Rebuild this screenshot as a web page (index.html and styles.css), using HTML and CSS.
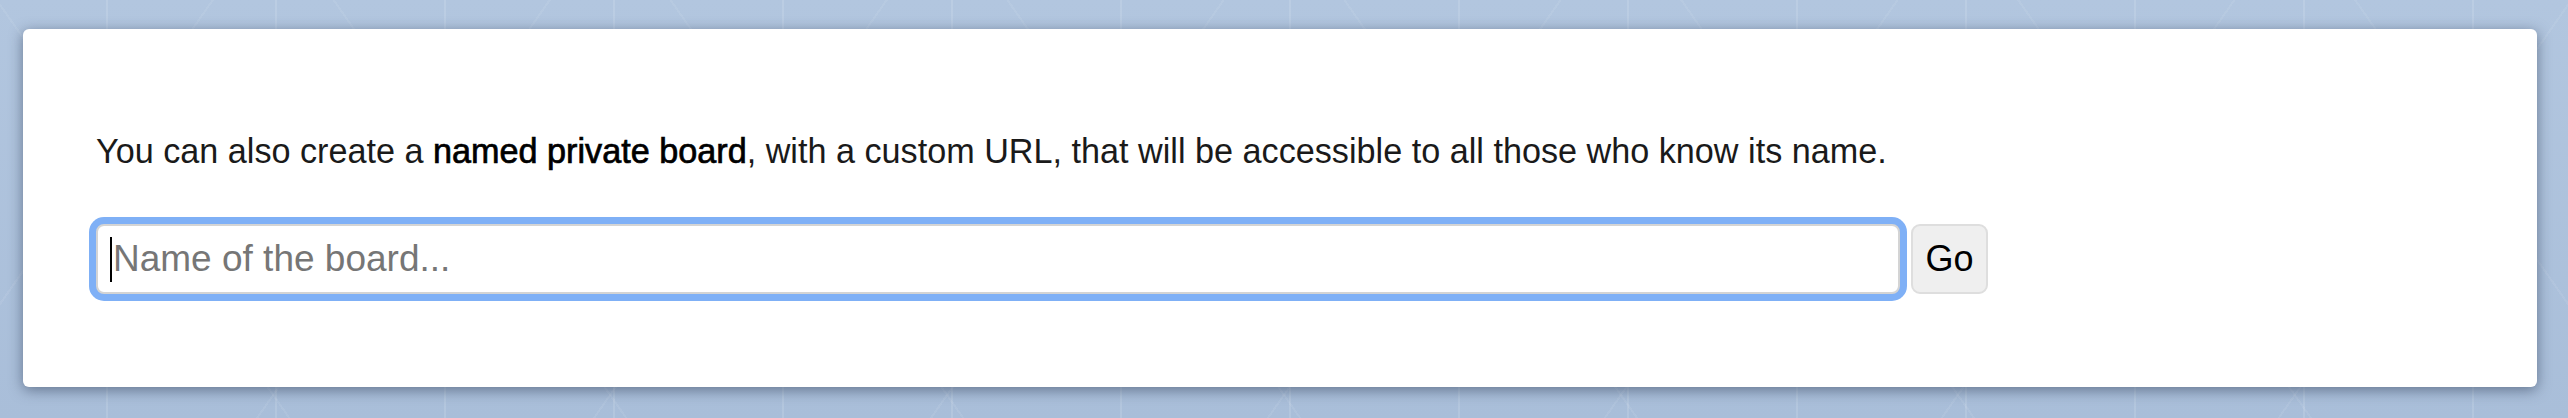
FILE: index.html
```html
<!DOCTYPE html>
<html lang="en">
<head>
<meta charset="utf-8">
<title>Named private board</title>
<link rel="stylesheet" href="styles.css">
</head>
<body>
<div class="card">
  <p class="intro">You can also create a <strong>named private board</strong>, with a custom URL, that will be accessible to all those who know its name.</p>
  <form class="board-form" onsubmit="return false;">
    <div class="input-wrap">
      <input class="board-input" type="text" placeholder="Name of the board...">
      <span class="caret"></span>
    </div>
    <button class="go-btn" type="submit">Go</button>
  </form>
</div>
</body>
</html>
```
FILE: styles.css
```css
html, body {
  margin: 0;
  padding: 0;
}
body {
  width: 2568px;
  height: 418px;
  overflow: hidden;
  background-color: #adc2dc;
  background-image:
    repeating-linear-gradient(90deg, transparent 0, transparent 106px, rgba(255,255,255,0.12) 106px, rgba(255,255,255,0.12) 108px, transparent 108px, transparent 169px),
    repeating-linear-gradient(55deg, transparent 0, transparent 236px, rgba(255,255,255,0.07) 236px, rgba(255,255,255,0.07) 238px, transparent 238px, transparent 276px),
    repeating-linear-gradient(-55deg, transparent 0, transparent 236px, rgba(255,255,255,0.07) 236px, rgba(255,255,255,0.07) 238px, transparent 238px, transparent 276px),
    linear-gradient(180deg, #b2c6df 0%, #a9bed9 100%);
  font-family: "Liberation Sans", Arial, sans-serif;
  display: flex;
  padding: 29px 31px 31px 23px;
  box-sizing: border-box;
}
.card {
  flex: 1;
  background: #ffffff;
  border-radius: 6px;
  box-shadow: 0 3px 14px rgba(40, 55, 80, 0.55);
  padding: 102px 73px 93px 73px;
  display: flex;
  flex-direction: column;
}
.intro {
  margin: 0;
  font-size: 34.2px;
  line-height: 40px;
  color: #1a1a1a;
  font-weight: normal;
}
.intro strong {
  font-weight: normal;
  color: #000;
  -webkit-text-stroke: 0.7px #000;
}
.board-form {
  margin: 53px 0 0 0;
  display: flex;
  align-items: center;
  gap: 11px;
}
.input-wrap {
  position: relative;
  display: flex;
}
.board-input {
  width: 1804px;
  height: 70px;
  box-sizing: border-box;
  border: 2px solid #d4d4d4;
  border-radius: 8px;
  background: #fff;
  box-shadow: 0 0 0 7px #7fb0f6;
  outline: none;
  padding: 0 15px 0 15px;
  font-family: "Liberation Sans", Arial, sans-serif;
  font-size: 37px;
  color: #111;
}
.board-input::placeholder {
  color: #767676;
}
.caret {
  position: absolute;
  left: 14px;
  top: 13px;
  width: 2px;
  height: 45px;
  background: #000;
}
.go-btn {
  width: 77px;
  height: 70px;
  box-sizing: border-box;
  border: 2px solid #dedede;
  border-radius: 9px;
  background: #efefef;
  font-family: "Liberation Sans", Arial, sans-serif;
  font-size: 36px;
  color: #000;
  padding: 0;
}
```
